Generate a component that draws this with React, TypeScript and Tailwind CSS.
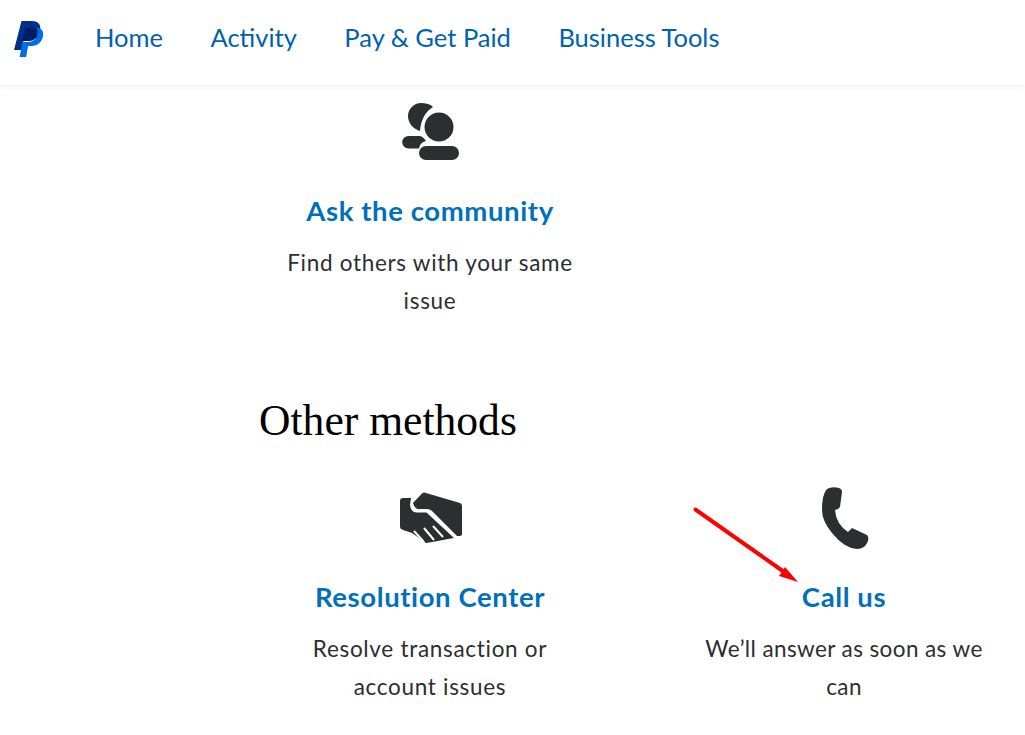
const navItems = ["Home", "Activity", "Pay & Get Paid", "Business Tools"];

function PayPalLogo() {
  return (
    <svg width="30" height="36" viewBox="0 0 32 36" preserveAspectRatio="none" className="shrink-0">
      <path d="M8 0h11c6 0 10 3 9 9-1 7-6 11-13 11h-5l-2 9H0z" fill="#003087" />
      <path d="M14 7h11c4 0 7 3 6 8-1 6-6 10-12 10h-4l-2 11H6l3-15h6c5 0 9-3 10-7z" fill="#0070e0" />
      <path d="M9 20h6c5 0 9-3 10-8 .3-2 0-3-.5-4.500C23 7 21 7 19 7h-7z" fill="#001c64" />
    </svg>
  );
}

function CommunityIcon() {
  return (
    <svg width="58" height="58" viewBox="0 0 58 58" fill="#2c2e2f" className="ml-[2px]">
      <path d="M31 4C24 8 19 16 18 28 11 26 6 20 6 13 6 6 12 0 19 0c5 0 9 1 12 4z" />
      <circle cx="37" cy="24" r="14.500" />
      <path d="M7 33h10c3 0 5 2 7 5-4 1-6 3-7 7.500H7c-9 0-9-12.500 0-12.500z" />
      <rect x="17" y="43" width="40" height="14" rx="7" />
    </svg>
  );
}

function HandshakeIcon() {
  return (
    <svg width="62" height="52" viewBox="0 0 62 52" fill="#2c2e2f" className="ml-[2px]">
      <path d="M13 11 22 1.500Q24 0 26 1L60 11Q62 12 62 14V42Q62 44 60 44H57L32 19Q30 17 27 17H20Q15 18 13 11Z" />
      <path d="M3 6H11L10 13Q11 21 18 20.500H26.500L54 46 48 47 35 49.500 26 51 12 41 3 38Q0 37 0 35V9Q0 6 3 6Z" />
      <path d="M14 39 24 50M24 36 34 48M33 34 43 45" stroke="#fff" strokeWidth="2" fill="none" />
    </svg>
  );
}

function PhoneIcon() {
  return (
    <svg width="48" height="64" viewBox="0 0 48 64" fill="#2c2e2f" className="ml-[4px]">
      <path d="M5 3Q10 0 17 2 20 3 20 6L18 21Q17 23 13 24 14 38 26 46L30 42 45 49Q47 51 46 55 43 63 35 63 22 62 10 47 0 35 0 24 0 8 5 3Z" />
    </svg>
  );
}

function MethodCard({
  icon,
  title,
  lines,
  textClass = "tracking-[0.7px]",
}: {
  icon: React.ReactNode;
  title: string;
  lines: string[];
  textClass?: string;
}) {
  return (
    <div className="flex w-[342px] flex-col items-center text-center">
      <div className="flex h-[94px] items-center justify-center">{icon}</div>
      <h3 className="mt-[14px] text-[27.5px] leading-[36px] font-bold tracking-[0.6px] text-[#0070ba]">{title}</h3>
      <div className={`mt-[15px] text-[22.5px] leading-[38px] text-[#2c2e2f] ${textClass}`}>
        {lines.map((line) => (
          <p key={line}>{line}</p>
        ))}
      </div>
    </div>
  );
}

export default function App() {
  return (
    <div className="relative h-[735px] w-[1025px] overflow-hidden bg-white font-['Lato','Liberation_Sans',sans-serif]">
      <header className="flex h-[85px] items-center bg-white pb-[8px] pl-[14px] shadow-[0_1px_6px_rgba(0,0,0,0.08)]">
        <PayPalLogo />
        <nav className="-mt-[2px] ml-[51px] flex gap-[47.500px] text-[25.500px] text-[#0062a8]">
          {navItems.map((item) => (
            <a key={item}>{item}</a>
          ))}
        </nav>
      </header>

      <main className="pl-[259px]">
        <MethodCard
          icon={<CommunityIcon />}
          title="Ask the community"
          lines={["Find others with your same", "issue"]}
        />
        <h2 className="mt-[72px] font-['Liberation_Serif',serif] text-[43.600px] leading-[56px] text-black">Other methods</h2>
        <div className="mt-[23px] flex gap-[72px]">
          <MethodCard
            icon={<HandshakeIcon />}
            title="Resolution Center"
            lines={["Resolve transaction or", "account issues"]}
          />
          <MethodCard
            icon={<PhoneIcon />}
            title="Call us"
            lines={["We’ll answer as soon as we", "can"]}
            textClass="tracking-[0.4px]"
          />
        </div>
      </main>

      {/* annotation arrow over the page */}
      <svg className="absolute top-[500px] left-[685px]" width="125" height="90" viewBox="0 0 125 90">
        <path d="M10.500 9.500 102 74" stroke="#ff0000" strokeWidth="4" strokeLinecap="round" fill="none" />
        <path d="M113 82 94 76 100 67z" fill="#ff0000" />
      </svg>
    </div>
  );
}
